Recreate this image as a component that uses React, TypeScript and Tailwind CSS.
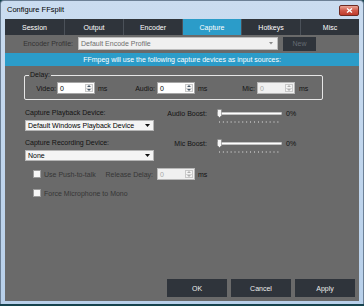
import React from 'react';

const tabs = ['Session', 'Output', 'Encoder', 'Capture', 'Hotkeys', 'Misc'];

function Spinner({ value, disabled }: { value: string; disabled?: boolean }) {
  return (
    <div
      className={`w-[38px] h-[12px] flex items-stretch border ${
        disabled ? 'border-[#b8b8b8] bg-[#f0f0f0] text-[#a8a8a8]' : 'border-[#a6a6a6] bg-white text-black'
      }`}
    >
      <span className="flex-1 flex items-center pl-[2px]">{value}</span>
      <div className="w-[8px] my-[1px] mr-[1px] flex flex-col border border-[#c9c9c9] bg-[#f3f3f3]">
        <div className="flex-1 flex items-center justify-center border-b border-[#d3d3d3]">
          <svg width="4" height="2" viewBox="0 0 4 2">
            <path d="M0 2 L2 0 L4 2 Z" fill={disabled ? '#b0b0b0' : '#4a5a6a'} />
          </svg>
        </div>
        <div className="flex-1 flex items-center justify-center">
          <svg width="4" height="2" viewBox="0 0 4 2">
            <path d="M0 0 L4 0 L2 2 Z" fill={disabled ? '#b0b0b0' : '#4a5a6a'} />
          </svg>
        </div>
      </div>
    </div>
  );
}

function Select({ value }: { value: string }) {
  return (
    <div className="w-[129px] h-[11px] flex items-center justify-between bg-[#f4f4f4] border border-[#b5b5b5] pl-[2px] pr-[3px] text-black">
      <span>{value}</span>
      <svg width="5" height="3" viewBox="0 0 5 3">
        <path d="M0 0 H5 L2.5 3 Z" fill="#111" />
      </svg>
    </div>
  );
}

function Slider() {
  return (
    <svg width="66" height="15" viewBox="0 0 66 15">
      <rect x="0.5" y="3.5" width="64" height="2" fill="#ffffff" stroke="#cfcfcf" strokeWidth="0.5" />
      {Array.from({ length: 16 }).map((_, i) => (
        <rect key={i} x={2 + i * 3.9} y="12" width="0.8" height="2" fill="#b9b9b9" />
      ))}
      <path d="M0.5 0.5 H4.5 V6.5 L2.5 8.5 L0.5 6.5 Z" fill="#f6f6f6" stroke="#7d7d7d" strokeWidth="0.6" />
    </svg>
  );
}

function Checkbox() {
  return <div className="w-[8px] h-[8px] bg-[#f7f7f7] border border-[#9c9c9c]" />;
}

export default function App() {
  return (
    <div className="w-[364px] h-[306px] bg-[#15434e] font-['Liberation_Sans',Arial,sans-serif] text-[7px] leading-none">
      <div className="h-[304px] flex flex-col bg-gradient-to-b from-[#cadcf0] to-[#b8d0ea] border border-b-0 border-[#6c8096] rounded-t-[4px]">
        {/* Title bar */}
        <div className="h-[18px] flex items-center justify-between pl-[6px] pr-[4px]">
          <span className="text-[7.5px] text-black">Configure FFsplit</span>
          <div className="w-[20px] h-[11px] flex items-center justify-center rounded-[2px] border border-[#6e2a22] bg-gradient-to-b from-[#e9a597] via-[#d0594a] to-[#bf3a2b]">
            <svg width="7" height="5" viewBox="0 0 7 5">
              <path d="M1 0.5 L6 4.5 M6 0.5 L1 4.5" stroke="#fff" strokeWidth="1.4" />
            </svg>
          </div>
        </div>

        {/* Client area */}
        <div className="mx-[4px] h-[282px] flex flex-col">
          {/* Tabs */}
          <div className="h-[16px] flex">
            {tabs.map((t, i) => (
              <div
                key={t}
                className={`w-[59px] flex items-center justify-center text-white ${
                  i > 0 ? 'border-l border-[#4b5159]' : ''
                } ${t === 'Capture' ? 'bg-[#2b9cc9]' : 'bg-[#2f343b]'}`}
              >
                {t}
              </div>
            ))}
          </div>

          {/* Page */}
          <div className="flex-1 flex flex-col bg-[#6a6a6a] text-[#121212]">
            {/* Encoder profile */}
            <div className="mt-[2px] h-[13px] flex items-center">
              <span className="w-[68px] text-right text-[#333]">Encoder Profile:</span>
              <div className="ml-[5px] w-[200px] h-[13px] flex items-center justify-between bg-[#f0f0f0] border border-[#bdbdbd] pl-[2px] pr-[4px] text-[#6e6e6e]">
                <span>Default Encode Profile</span>
                <svg width="4" height="2.5" viewBox="0 0 4 2.5">
                  <path d="M0 0 H4 L2 2.5 Z" fill="#8a8a8a" />
                </svg>
              </div>
              <div className="ml-[5px] w-[33px] h-[14px] flex items-center justify-center bg-[#2f343b] text-[#656b73]">
                New
              </div>
            </div>

            {/* Banner */}
            <div className="mt-[3px] h-[13px] flex items-center justify-center bg-[#2b9cc9] text-white">
              FFmpeg will use the following capture devices as input sources:
            </div>

            {/* Delay group */}
            <fieldset className="mt-[5px] ml-[19px] w-[299px] border border-[#e6e6e6] rounded-[2px] pb-[5px]">
              <legend className="ml-[4px] px-[1px] leading-[8px]">Delay:</legend>
              <div className="mt-[3px] flex items-center">
                <div className="w-[100px] flex items-center">
                  <span className="w-[31px] text-right">Video:</span>
                  <div className="ml-[1px]"><Spinner value="0" /></div>
                  <span className="ml-[3px]">ms</span>
                </div>
                <div className="w-[100px] flex items-center">
                  <span className="w-[30px] text-right">Audio:</span>
                  <div className="ml-[2px]"><Spinner value="0" /></div>
                  <span className="ml-[3px]">ms</span>
                </div>
                <div className="flex items-center">
                  <span className="w-[30px] text-right">Mic:</span>
                  <div className="ml-[2px]"><Spinner value="0" disabled /></div>
                  <span className="ml-[4px]">ms</span>
                </div>
              </div>
            </fieldset>

            {/* Playback device */}
            <div className="mt-[9px] ml-[20px] flex">
              <div className="w-[129px] flex flex-col">
                <span className="h-[7px]">Capture Playback Device:</span>
                <div className="mt-[4px]"><Select value="Default Windows Playback Device" /></div>
              </div>
              <div className="w-[53px] text-right pt-[1px]">Audio Boost:</div>
              <div className="ml-[10px]"><Slider /></div>
              <span className="ml-[3px] pt-[1px]">0%</span>
            </div>

            {/* Recording device */}
            <div className="mt-[8px] ml-[20px] flex">
              <div className="w-[129px] flex flex-col">
                <span className="h-[7px]">Capture Recording Device:</span>
                <div className="mt-[4px]"><Select value="None" /></div>
              </div>
              <div className="w-[53px] text-right pt-[1px]">Mic Boost:</div>
              <div className="ml-[10px]"><Slider /></div>
              <span className="ml-[3px] pt-[1px]">0%</span>
            </div>

            {/* Push to talk */}
            <div className="mt-[7px] ml-[28px] flex items-center text-[#363636]">
              <div className="w-[72px] flex items-center">
                <Checkbox />
                <span className="ml-[3px]">Use Push-to-talk</span>
              </div>
              <span className="w-[48px] text-right">Release Delay:</span>
              <div className="ml-[4px]"><Spinner value="0" disabled /></div>
              <span className="ml-[3px] text-[#121212]">ms</span>
            </div>

            <div className="mt-[9px] ml-[28px] flex items-center text-[#363636]">
              <Checkbox />
              <span className="ml-[3px]">Force Microphone to Mono</span>
            </div>

            {/* Buttons */}
            <div className="mt-auto mb-[4px] mr-[4px] flex justify-end gap-[4px]">
              {['OK', 'Cancel', 'Apply'].map((b) => (
                <div key={b} className="w-[60px] h-[18px] flex items-center justify-center bg-[#2f343b] text-[#ececec]">
                  {b}
                </div>
              ))}
            </div>
          </div>
        </div>
      </div>
    </div>
  );
}
